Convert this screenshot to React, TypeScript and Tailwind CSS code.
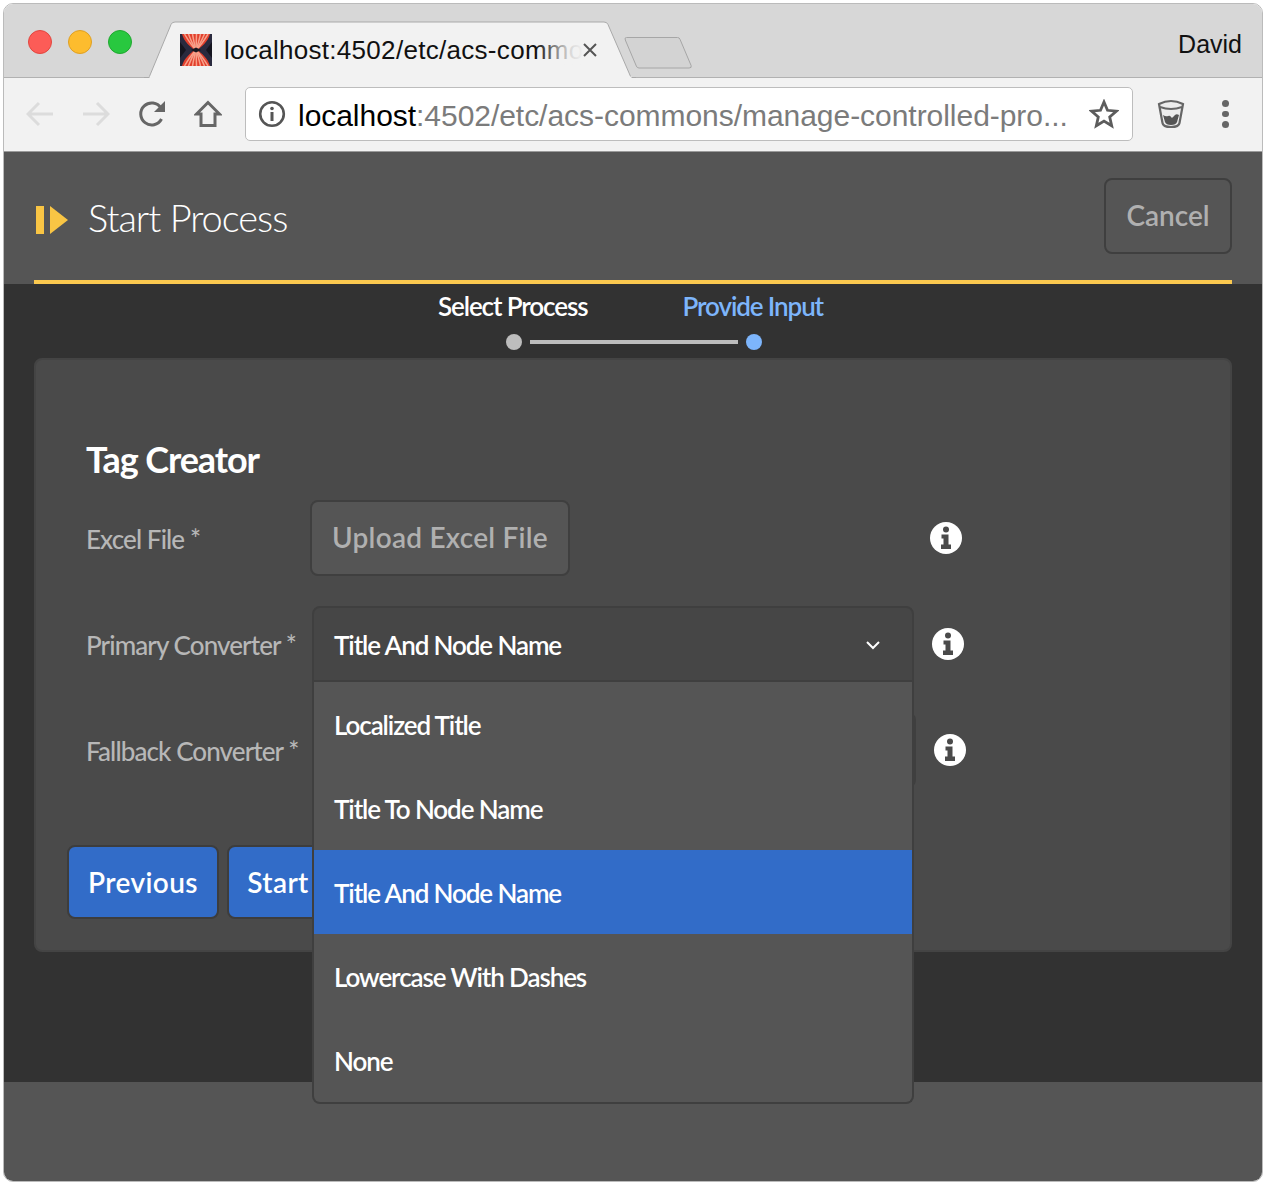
const adobe = "font-['Lato','Noto_Sans',sans-serif]";

function InfoIcon() {
  return (
    <svg width="32" height="32" viewBox="0 0 32 32" className="shrink-0">
      <circle cx="16" cy="16" r="16" fill="#fff" />
      <circle cx="16" cy="7.500" r="3" fill="#4a4a4a" />
      <path d="M11.500 12.500h7v10h2.500v4.500h-10v-4.500h2.500v-6h-2z" fill="#4a4a4a" />
    </svg>
  );
}

function Favicon() {
  const xs = [4.500, 8.500, 12.500, 16.500, 20.500, 24.500, 28];
  return (
    <svg width="32" height="32" viewBox="0 0 32 32" className="shrink-0">
      <rect width="32" height="32" fill="#2a2a3e" />
      <path d="M6 16L0 8v16zM26 16l6-8v16z" fill="#15151f" />
      <path d="M2 0H30C28 8 21 13 17.500 16C21 19 28 24 30 32H2C4 24 11 19 14.500 16C11 13 4 8 2 0Z" fill="#e23f2c" />
      {xs.map((x) => (
        <g key={x} stroke="#f6a08a" strokeWidth="1.500">
          <path d={`M${x} 0Q${(x + 16) / 2} 10 16 16`} fill="none" />
          <path d={`M${x} 32Q${(x + 16) / 2} 22 16 16`} fill="none" />
        </g>
      ))}
      <path d="M11 16L16 13.500 21 16 16 18.500z" fill="#17171f" />
    </svg>
  );
}

function Lights() {
  return (
    <div className="flex gap-[16px] pl-[24px] pt-[26px]">
      <div className="size-[24px] rounded-full border border-[#e2463f] bg-[#fc5c57]" />
      <div className="size-[24px] rounded-full border border-[#dfa023] bg-[#fdbc2e]" />
      <div className="size-[24px] rounded-full border border-[#1fa82f] bg-[#28c83f]" />
    </div>
  );
}

function TabStrip() {
  return (
    <div className="relative h-[74px] shrink-0 border-b border-[#b1b1b1] bg-[#d7d7d7]">
      <Lights />
      <svg width="560" height="60" viewBox="0 0 560 60" className="absolute left-[140px] top-[14px]">
        <path d="M482.500 19.500h51q2 0 2.600 2l11 26q.9 2.500-2 2.500H495q-2 0-2.700-2l-11-26q-1-2.500 1.200-2.500z" fill="#d3d3d3" stroke="#a6a6a6" />
        <path d="M0 59.500h5L27 6.500q1-2.500 4-2.500h429q3 0 4 2.500l23 53h5z" fill="#f2f2f2" stroke="#a9a9a9" />
        <path d="M5.500 59.500h482" stroke="#f2f2f2" strokeWidth="2" />
      </svg>
      <div className="absolute left-[176px] top-[30px] flex h-[32px] items-center">
        <Favicon />
        <div className="relative ml-[12px] w-[360px] whitespace-nowrap font-['Liberation_Sans',sans-serif] text-[26px] leading-[32px] tracking-[0.3px] text-[#111]">
          localhost:4502/etc/acs-commo
          <div className="absolute inset-y-0 right-0 w-[48px] bg-linear-to-r from-transparent via-[#f2f2f2e0] via-70% to-[#f2f2f2]" />
        </div>
        <svg width="16" height="16" viewBox="0 0 16 16" className="relative ml-[-2px]">
          <path d="M2 2l12 12M14 2L2 14" stroke="#555" strokeWidth="2" />
        </svg>
      </div>
      <span className="absolute right-[20px] top-[24px] font-['Liberation_Sans',sans-serif] text-[25px] leading-[32px] text-[#111]">David</span>
    </div>
  );
}

function ToolbarIcons() {
  return (
    <div className="flex w-[241px] shrink-0 items-center pl-[22px]">
      <svg width="28" height="26" viewBox="0 0 28 26">
        <path d="M27 13H3M13 2L2 13l11 11" fill="none" stroke="#dcdcdc" strokeWidth="3" />
      </svg>
      <svg width="28" height="26" viewBox="0 0 28 26" className="ml-[28px]">
        <path d="M1 13h24M15 2l11 11-11 11" fill="none" stroke="#dcdcdc" strokeWidth="3" />
      </svg>
      <svg width="30" height="30" viewBox="0 0 30 30" className="ml-[28px]">
        <path d="M23.500 20a11 11 0 1 1-.5-11" fill="none" stroke="#666" strokeWidth="3" />
        <path d="M27 2v11H16z" fill="#666" />
      </svg>
      <svg width="28" height="28" viewBox="0 0 28 28" className="ml-[26px]">
        <path d="M14 2.500L2.500 14H7v11.500h14V14h4.500z" fill="none" stroke="#666" strokeWidth="3" strokeLinejoin="miter" />
      </svg>
    </div>
  );
}

function Toolbar() {
  return (
    <div className="flex h-[74px] shrink-0 items-center border-b border-[#9a9a9a] bg-[#f2f2f2] pb-[1px]">
      <ToolbarIcons />
      <div className="flex h-[54px] w-[888px] shrink-0 items-center rounded-[5px] border border-[#bdbdbd] bg-white pl-[12px]">
        <svg width="28" height="28" viewBox="0 0 28 28" className="shrink-0">
          <circle cx="14" cy="14" r="11.800" fill="none" stroke="#555" strokeWidth="2.600" />
          <circle cx="14" cy="8.500" r="1.800" fill="#555" />
          <rect x="12.500" y="12" width="3" height="9" fill="#555" />
        </svg>
        <span className="ml-[12px] mt-[3px] whitespace-nowrap font-['Liberation_Sans',sans-serif] text-[30px] leading-[36px] tracking-[-0.04px] text-[#7b7b7b]">
          <span className="text-black">localhost</span>:4502/etc/acs-commons/manage-controlled-pro...
        </span>
        <svg width="30" height="30" viewBox="0 0 30 30" className="ml-[21px] shrink-0">
          <path d="M15 3l3.500 8.300 9 .8-6.800 5.900 2 8.800-7.700-4.700-7.700 4.700 2-8.800-6.800-5.900 9-.8z" fill="none" stroke="#5c5c5c" strokeWidth="2.800" />
        </svg>
      </div>
      <svg width="28" height="30" viewBox="0 0 28 30" className="ml-[24px]">
        <path d="M2 5q12-6 24 0l-3.500 19q-.5 4-8.500 4t-8.500-4z" fill="#ececec" stroke="#666" strokeWidth="2.200" />
        <path d="M3 8q11 4 22 0" fill="none" stroke="#666" strokeWidth="2" />
        <path d="M6 16q3 2 5 1t3 1 3-1 5-1l-2 7q-1 3-6 3t-6-3z" fill="#555" />
      </svg>
      <div className="ml-[37px] flex flex-col gap-[4px]">
        <div className="size-[6.500px] rounded-full bg-[#666]" />
        <div className="size-[6.500px] rounded-full bg-[#666]" />
        <div className="size-[6.500px] rounded-full bg-[#666]" />
      </div>
    </div>
  );
}

function PageHeader() {
  return (
    <div className="mx-[30px] flex h-[132px] shrink-0 items-center justify-between border-b-4 border-[#fbc94f] pb-[2px] pt-[2px]">
      <div className="flex items-center pl-[2px]">
        <svg width="32" height="28" viewBox="0 0 32 28" className="mt-[8px]">
          <rect width="8" height="28" fill="#f9c544" />
          <path d="M14 0l18 14-18 14z" fill="#f9c544" />
        </svg>
        <h1 className={`ml-[20px] mt-[2px] text-[38px] leading-[46px] font-light tracking-[-1px] text-white ${adobe}`}>Start Process</h1>
      </div>
      <button className={`h-[76px] w-[128px] rounded-[8px] border-2 border-[#3f3f3f] bg-[#555] pb-[2px] text-[28px] font-semibold text-[#b0b0b0] ${adobe}`}>Cancel</button>
    </div>
  );
}

function Steps() {
  return (
    <div className={`flex h-[74px] shrink-0 flex-col items-center ${adobe}`}>
      <div className="flex h-[44px] items-center gap-[95px] pr-[5px] text-[26px] leading-[32px] font-semibold tracking-[-1.1px]">
        <span className="text-white">Select Process</span>
        <span className="text-[#7db5fb]">Provide Input</span>
      </div>
      <div className="flex items-center gap-[8px] pl-[2px] pt-[6px]">
        <div className="size-[16px] rounded-full bg-[#bdbdbd]" />
        <div className="h-[4px] w-[208px] bg-[#bdbdbd]" />
        <div className="size-[16px] rounded-full bg-[#7db5fb]" />
      </div>
    </div>
  );
}

const options = ["Localized Title", "Title To Node Name", "Title And Node Name", "Lowercase With Dashes", "None"];

function Dropdown() {
  return (
    <div className="absolute left-0 top-full z-10 h-[422px] w-[602px] rounded-b-[8px] border-2 border-t-0 border-[#3f3f3f] bg-[#555]">
      {options.map((o) => (
        <div
          key={o}
          className={`flex h-[84px] items-center pl-[20px] pt-[2px] text-[26px] font-semibold tracking-[-1.1px] text-white ${o === "Title And Node Name" ? "bg-[#326cc8]" : ""}`}
        >
          {o}
        </div>
      ))}
    </div>
  );
}

function FormLabel({ children, width }: { children: string; width: string }) {
  return <div className={`shrink-0 pt-[2px] text-[26px] font-medium tracking-[-0.9px] text-[#b7b7b7] ${width}`}>{children}</div>;
}

function Card() {
  return (
    <div className={`mx-[30px] flex h-[594px] shrink-0 flex-col rounded-[8px] border-2 border-[#444] bg-[#4a4a4a] ${adobe}`}>
      <h2 className="ml-[50px] mt-[77px] text-[36px] leading-[44px] font-bold tracking-[-1.1px] text-white">Tag Creator</h2>
      <div className="ml-[50px] mt-[19px] flex h-[76px] items-center">
        <FormLabel width="w-[224px]">Excel File *</FormLabel>
        <button className="h-[76px] w-[260px] rounded-[8px] border-2 border-[#3f3f3f] bg-[#555] pb-[2px] text-[28px] font-semibold tracking-[0.25px] text-[#b0b0b0]">Upload Excel File</button>
        <div className="ml-[360px]"><InfoIcon /></div>
      </div>
      <div className="ml-[50px] mt-[30px] flex h-[76px] items-center">
        <FormLabel width="w-[226px]">Primary Converter *</FormLabel>
        <div className="relative h-[76px] w-[602px] shrink-0">
          <div className="flex h-[76px] items-center justify-between rounded-t-[8px] border-2 border-[#3f3f3f] bg-[#464646] pl-[20px] pr-[32px] pt-[2px] text-[26px] font-semibold tracking-[-1.1px] text-white">
            Title And Node Name
            <svg width="14" height="10" viewBox="0 0 14 10">
              <path d="M1 2l6 6 6-6" fill="none" stroke="#fff" strokeWidth="2" />
            </svg>
          </div>
          <Dropdown />
        </div>
        <div className="ml-[18px]"><InfoIcon /></div>
      </div>
      <div className="ml-[50px] mt-[30px] flex h-[76px] items-center">
        <FormLabel width="w-[228px]">Fallback Converter *</FormLabel>
        <div className="h-[76px] w-[602px] shrink-0 rounded-[8px] border-2 border-[#3f3f3f] bg-[#464646]" />
        <div className="ml-[18px]"><InfoIcon /></div>
      </div>
      <div className="ml-[31px] mt-[57px] flex gap-[8px]">
        <button className="h-[74px] w-[152px] rounded-[8px] border-2 border-[#3d3d3d] bg-[#326cc8] text-[28px] font-semibold tracking-[0.4px] text-white">Previous</button>
        <button className="h-[74px] w-[110px] rounded-[8px] border-2 border-[#3d3d3d] bg-[#326cc8] pr-[8px] text-[28px] font-semibold tracking-[0.4px] text-white">Start</button>
      </div>
    </div>
  );
}

export default function App() {
  return (
    <div className="h-[1184px] w-[1266px] bg-white pl-[3px] pt-[3px]">
      <div className="flex h-[1179px] w-[1260px] flex-col overflow-hidden rounded-[10px] border border-[#bbb]">
        <TabStrip />
        <Toolbar />
        <div className="flex flex-1 flex-col bg-[#555]">
          <PageHeader />
          <div className="flex h-[798px] shrink-0 flex-col bg-[#323232]">
            <Steps />
            <Card />
          </div>
        </div>
      </div>
    </div>
  );
}
